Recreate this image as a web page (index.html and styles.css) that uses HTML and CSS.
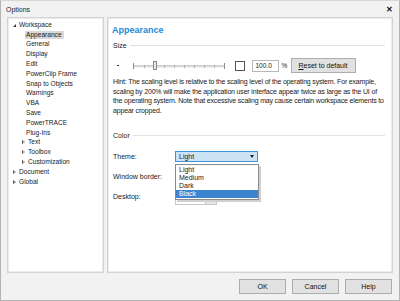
FILE: index.html
```html
<!DOCTYPE html>
<html lang="en">
<head>
    <meta charset="UTF-8">
    <title>Options</title>
    <link rel="stylesheet" href="styles.css">
</head>
<body>
<div class="window">
    <div class="titlebar">
        <span class="title">Options</span>
        <span class="close">&#x2715;</span>
    </div>

    <div class="main">
        <!-- arbol de categorias -->
        <div class="tree">
            <div class="node open lvl0"><span class="arrow-open"></span><span class="label">Workspace</span></div>
            <div class="node lvl1"><span class="label selected">Appearance</span></div>
            <div class="node lvl1"><span class="label">General</span></div>
            <div class="node lvl1"><span class="label">Display</span></div>
            <div class="node lvl1"><span class="label">Edit</span></div>
            <div class="node lvl1"><span class="label">PowerClip Frame</span></div>
            <div class="node lvl1"><span class="label">Snap to Objects</span></div>
            <div class="node lvl1"><span class="label">Warnings</span></div>
            <div class="node lvl1"><span class="label">VBA</span></div>
            <div class="node lvl1"><span class="label">Save</span></div>
            <div class="node lvl1"><span class="label">PowerTRACE</span></div>
            <div class="node lvl1"><span class="label">Plug-Ins</span></div>
            <div class="node lvl1b"><span class="arrow"></span><span class="label">Text</span></div>
            <div class="node lvl1b"><span class="arrow"></span><span class="label">Toolbox</span></div>
            <div class="node lvl1b"><span class="arrow"></span><span class="label">Customization</span></div>
            <div class="node lvl0"><span class="arrow"></span><span class="label">Document</span></div>
            <div class="node lvl0"><span class="arrow"></span><span class="label">Global</span></div>
        </div>

        <div class="page">
            <h2 class="page-title">Appearance</h2>

            <div class="group-label">Size</div>
            <div class="size-row">
                <span class="dot"></span>
                <svg class="slider" width="92" height="10" viewBox="0 0 92 10">
                    <line x1="1" y1="5" x2="91" y2="5" stroke="#a0a0a0" stroke-width="1"/>
                    <line x1="1" y1="6" x2="91" y2="6" stroke="#e3e3e3" stroke-width="1"/>
                    <line x1="0.5" y1="2" x2="0.5" y2="8" stroke="#909090"/>
                    <line x1="91.5" y1="2" x2="91.5" y2="8" stroke="#909090"/>
                    <line x1="11.5" y1="4" x2="11.5" y2="7" stroke="#b0b0b0"/>
                    <line x1="31.5" y1="4" x2="31.5" y2="7" stroke="#b0b0b0"/>
                    <line x1="41.5" y1="4" x2="41.5" y2="7" stroke="#b0b0b0"/>
                    <line x1="51.5" y1="4" x2="51.5" y2="7" stroke="#b0b0b0"/>
                    <line x1="61.5" y1="4" x2="61.5" y2="7" stroke="#b0b0b0"/>
                    <line x1="71.5" y1="4" x2="71.5" y2="7" stroke="#b0b0b0"/>
                    <line x1="81.5" y1="4" x2="81.5" y2="7" stroke="#b0b0b0"/>
                    <rect x="20.5" y="0.5" width="3" height="8" fill="#e8e8e8" stroke="#8a8a8a"/>
                </svg>
                <span class="checkbox"></span>
                <span class="num-input">100.0</span>
                <span class="pct">%</span>
                <span class="btn reset"><u>R</u>eset to default</span>
            </div>

            <p class="hint">Hint: The scaling level is relative to the scaling level of the operating system. For example, scaling by 200% will make the application user interface appear twice as large as the UI of the operating system. Note that excessive scaling may cause certain workspace elements to appear cropped.</p>

            <div class="group-label color-label">Color</div>

            <div class="form-row theme-row">
                <span class="field-label">Theme:</span>
                <div class="select active">
                    <span>Light</span>
                    <span class="caret"></span>
                    <ul class="dropdown">
                        <li>Light</li>
                        <li>Medium</li>
                        <li>Dark</li>
                        <li class="hover">Black</li>
                    </ul>
                </div>
            </div>
            <div class="form-row">
                <span class="field-label">Window border:</span>
            </div>
            <div class="form-row">
                <span class="field-label">Desktop:</span>
                <div class="select small">
                    <span class="caret-btn"><span class="caret"></span></span>
                </div>
            </div>
        </div>
    </div>

    <div class="footer">
        <span class="btn">OK</span>
        <span class="btn">Cancel</span>
        <span class="btn">Help</span>
    </div>
</div>
</body>
</html>
```

FILE: styles.css
```css
body {
    margin: 0;
    font-family: 'Liberation Sans', Arial, sans-serif;
    font-size: 7px;
    color: #1a1a1a;
    background: #fff;
}
.window {
    width: 400px;
    height: 301px;
    box-sizing: border-box;
    border: 1px solid #b4b4b4;
    border-top-color: #d8d8d8;
    background: #f2f2f2;
    display: flex;
    flex-direction: column;
}
.titlebar {
    height: 16px;
    display: flex;
    align-items: center;
    justify-content: space-between;
    padding: 0 6px 0 5px;
}
.title {
    font-size: 7px;
    color: #222;
}
.close {
    font-size: 8px;
    font-weight: bold;
    color: #111;
}
.main {
    display: flex;
    gap: 3px;
    padding: 0 6px 0 6px;
    height: 256px;
}
.tree {
    width: 97px;
    box-sizing: border-box;
    background: #fff;
    border: 1px solid #d3d3d3;
    box-shadow: inset 0 0 0 1px #ececec;
    padding-top: 2px;
    font-size: 6.6px;
}
.node {
    height: 9.8px;
    display: flex;
    align-items: center;
    white-space: nowrap;
}
.lvl0 {
    padding-left: 5px;
}
.lvl1 {
    padding-left: 17px;
}
.lvl1b {
    padding-left: 14px;
}
.label {
    padding: 0 1px;
    line-height: 8px;
}
.selected {
    background: #d9d9d9;
    padding-right: 2px;
}
.arrow-open {
    width: 0;
    height: 0;
    border-left: 3px solid transparent;
    border-bottom: 3px solid #333;
    margin-right: 2px;
    margin-top: 1px;
}
.arrow {
    width: 0;
    height: 0;
    border-top: 2.5px solid transparent;
    border-bottom: 2.5px solid transparent;
    border-left: 3px solid #555;
    margin-right: 2px;
    position: relative;
}
.arrow::after {
    content: "";
    position: absolute;
    left: -2.5px;
    top: -1.2px;
    border-top: 1.2px solid transparent;
    border-bottom: 1.2px solid transparent;
    border-left: 1.5px solid #fff;
}
.page {
    flex: 1;
    box-sizing: border-box;
    background: #fff;
    border: 1px solid #d3d3d3;
    box-shadow: inset 0 0 0 1px #ececec;
    padding: 0 7px 0 4px;
}
.page-title {
    margin: 6px 0 0 0;
    font-size: 9px;
    line-height: 12px;
    font-weight: bold;
    color: #1e8ad6;
}
.group-label {
    display: flex;
    align-items: center;
    gap: 3px;
    margin-top: 5px;
    height: 9px;
    padding-left: 1px;
}
.group-label::after {
    content: "";
    flex: 1;
    border-top: 1px solid #e2e2e2;
}
.size-row {
    display: flex;
    align-items: center;
    height: 15px;
    margin-top: 8px;
}
.dot {
    width: 1.5px;
    height: 1.5px;
    background: #333;
    margin-left: 5px;
    margin-right: 14px;
}
.slider {
    display: block;
}
.checkbox {
    width: 8px;
    height: 8px;
    border: 1px solid #555;
    background: #fff;
    margin-left: 10px;
}
.num-input {
    width: 27px;
    height: 12px;
    box-sizing: border-box;
    border: 1px solid #b8b8b8;
    margin-left: 7px;
    padding-left: 3px;
    line-height: 10px;
    font-size: 6.5px;
}
.pct {
    margin-left: 3px;
    width: 9px;
    font-size: 6.5px;
}
.btn {
    display: inline-flex;
    align-items: center;
    justify-content: center;
    box-sizing: border-box;
    background: #e1e1e1;
    border: 1px solid #adadad;
    color: #111;
}
.reset {
    width: 65px;
    height: 15px;
}
.hint {
    margin: 4px 0 0 1px;
    line-height: 9.5px;
    font-size: 7px;
    letter-spacing: -0.17px;
}
.color-label {
    margin-top: 16px;
}
.form-row {
    display: flex;
    align-items: center;
    height: 11px;
    margin-top: 9px;
    padding-left: 1px;
}
.theme-row {
    margin-top: 11px;
}
.field-label {
    width: 62px;
}
.select {
    position: relative;
    width: 83px;
    height: 11px;
    box-sizing: border-box;
    display: flex;
    align-items: center;
    padding-left: 3px;
}
.select.active {
    background: #cde4f7;
    border: 1px solid #3c93d8;
}
.caret {
    width: 0;
    height: 0;
    border-left: 2.5px solid transparent;
    border-right: 2.5px solid transparent;
    border-top: 3px solid #222;
    margin-left: auto;
    margin-right: 3px;
}
.dropdown {
    position: absolute;
    left: -1px;
    top: 12px;
    width: 84px;
    box-sizing: border-box;
    margin: 0;
    padding: 1px 0;
    list-style: none;
    background: #fff;
    border: 1px solid #8a8a8a;
    box-shadow: 2px 2px 0 #d0d0d0;
    z-index: 2;
}
.dropdown li {
    height: 8px;
    line-height: 8px;
    padding-left: 3px;
}
.dropdown li.hover {
    background: #3c84cf;
    color: #fff;
}
.select.small {
    width: 42px;
    border: 1px solid #c8c8c8;
    padding-left: 0;
    margin-top: 6px;
}
.caret-btn {
    margin-left: auto;
    width: 10px;
    height: 100%;
    background: #e5e5e5;
    border-left: 1px solid #c8c8c8;
    display: flex;
    align-items: center;
    justify-content: center;
}
.caret-btn .caret {
    margin: 0;
}
.footer {
    flex: 1;
    display: flex;
    justify-content: flex-end;
    align-items: center;
    gap: 6px;
    padding-right: 7px;
}
.footer .btn {
    width: 47px;
    height: 15px;
}
```
